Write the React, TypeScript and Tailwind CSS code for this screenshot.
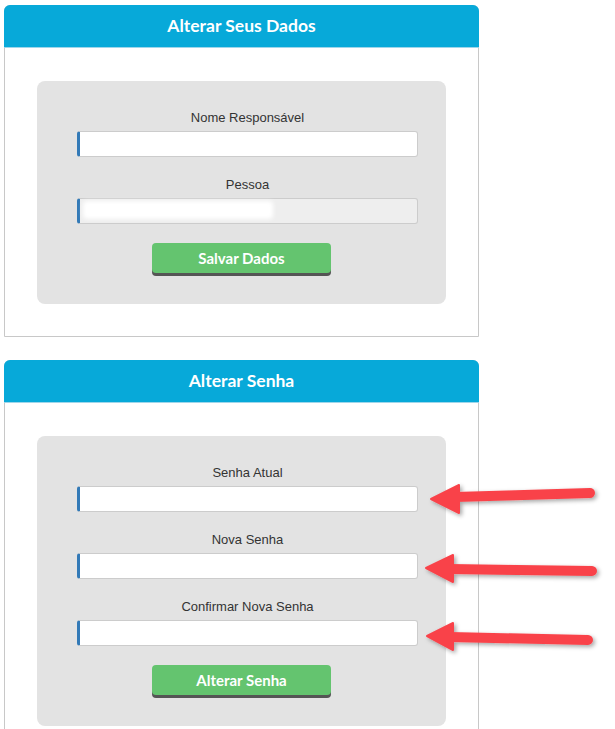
import React from 'react';

const labelCls = "block text-center text-[13px] leading-[20px] text-[#333] mb-[3px] font-['Liberation_Sans',Arial,sans-serif]";
const inputCls =
  'block w-full h-[26px] border border-[#cccccc] border-l-[3px] border-l-[#337ab7] rounded-[3px] px-2 text-[14px] outline-none';

const Field: React.FC<{ label: string; children?: React.ReactNode; disabled?: boolean; first?: boolean }> = ({
  label,
  children,
  disabled,
  first,
}) => (
  <div className={first ? '' : 'mt-[18px]'}>
    <label className={labelCls}>{label}</label>
    <div className="relative">
      <input type="text" disabled={disabled} className={`${inputCls} ${disabled ? 'bg-[#eeeeee]' : 'bg-white'}`} />
      {children}
    </div>
  </div>
);

const GreenButton: React.FC<{ text: string }> = ({ text }) => (
  <div className="flex justify-center mt-[19px]">
    <button className="w-[179px] h-[30px] rounded-[4px] bg-[#64c46f] text-white text-[15px] font-bold font-['Lato','Open_Sans',sans-serif] shadow-[0_3px_0_#555555]">
      {text}
    </button>
  </div>
);

const Panel: React.FC<{ title: string; children: React.ReactNode; last?: boolean }> = ({ title, children, last }) => (
  <div className={`w-[475px] border border-[#c8c8c8] rounded-t-[6px] bg-white ${last ? '' : 'mb-[23px]'}`}>
    <div className="h-[43px] -mx-px -mt-px rounded-t-[6px] bg-[#07a9d9] border-b border-[#9fd6ea] flex items-center justify-center">
      <h2 className="text-white text-[17.5px] font-bold font-['Lato','Open_Sans',sans-serif]">{title}</h2>
    </div>
    <div className="px-[32px] pt-[33px] pb-[32px]">
      <div className="bg-[#e3e3e3] rounded-[8px] pt-[27px] pb-[31px]">
        <div className="pl-[40px] pr-[28px]">{children}</div>
      </div>
    </div>
  </div>
);

export default function App() {
  return (
    <div className="relative w-[615px] h-[729px] overflow-hidden bg-white">
      <div className="pt-[5px] pl-[4px]">
        <Panel title="Alterar Seus Dados">
          <Field label="Nome Responsável" first />
          <Field label="Pessoa" disabled>
            <div className="absolute left-[6px] top-[3px] w-[190px] h-[18px] bg-white blur-[2px] rounded-[4px]" />
          </Field>
          <div className="-ml-[40px] -mr-[28px]">
            <GreenButton text="Salvar Dados" />
          </div>
        </Panel>
        <Panel title="Alterar Senha" last>
          <Field label="Senha Atual" first />
          <Field label="Nova Senha" />
          <Field label="Confirmar Nova Senha" />
          <div className="-ml-[40px] -mr-[28px]">
            <GreenButton text="Alterar Senha" />
          </div>
        </Panel>
      </div>

      {/* setas de destaque */}
      <svg
        className="absolute inset-0 pointer-events-none"
        width="615"
        height="729"
        viewBox="0 0 615 729"
      >
        <defs>
          <filter id="sh" x="-10%" y="-50%" width="120%" height="200%">
            <feDropShadow dx="2" dy="2" stdDeviation="2" floodColor="#000" floodOpacity="0.35" />
          </filter>
        </defs>
        <g fill="#f9434a" stroke="#f9434a" strokeLinejoin="round" filter="url(#sh)">
          <line x1="455" y1="497" x2="590" y2="493" strokeWidth="10" strokeLinecap="round" />
          <polygon points="431,499 459,485 459,513" strokeWidth="2" />
          <line x1="450" y1="569" x2="592" y2="571" strokeWidth="10" strokeLinecap="round" />
          <polygon points="426,568 453,555 453,582" strokeWidth="2" />
          <line x1="450" y1="637" x2="588" y2="640" strokeWidth="10" strokeLinecap="round" />
          <polygon points="427,636 453,623 453,650" strokeWidth="2" />
        </g>
      </svg>
    </div>
  );
}
